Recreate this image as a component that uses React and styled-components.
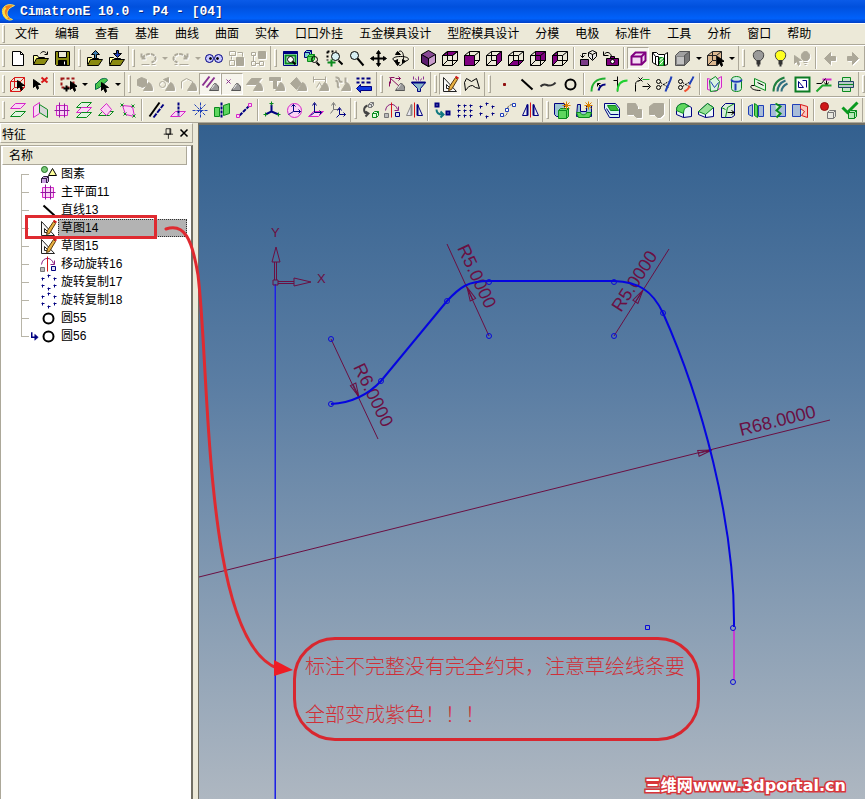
import React from 'react';
import styled, { createGlobalStyle, css } from 'styled-components';

const GlobalStyle = createGlobalStyle`
  * { box-sizing: border-box; }
  html, body, #root { height: 100%; }
  body {
    margin: 0;
    overflow: hidden;
    background: #ece9d8;
    color: #000;
    font-family: "Liberation Sans", "Noto Sans CJK SC", sans-serif;
    font-size: 12px;
  }
  button {
    font: inherit;
    color: inherit;
    border: 0;
    padding: 0;
    background: none;
  }
`;

const Window = styled.div`
  position: relative;
  display: flex;
  flex-direction: column;
  height: 100vh;
  overflow: hidden;
`;

const TitleBar = styled.header`
  flex: none;
  display: flex;
  align-items: center;
  gap: 2px;
  height: 23px;
  background: linear-gradient(#0a5be8, #0050dd 30%, #0061fb 80%, #003fc4);

  h1 {
    margin: 0;
    color: #fff;
    font: bold 13px "Liberation Mono", monospace;
    text-shadow: 1px 1px 0 #0a2a80;
    white-space: pre;
  }
`;

const Bar = styled.div`
  flex: none;
  display: flex;
  align-items: center;
  height: 26px;
  border-top: 1px solid #fff;
  border-bottom: 1px solid #aca899;
  overflow: hidden;
`;

const MenuBar = styled(Bar)`
  height: 22px;
`;

const MenuButton = styled.button`
  flex: none;
  padding: 0 8px;
  line-height: 20px;
  white-space: nowrap;
`;

const Grip = styled.span`
  flex: none;
  width: 3px;
  height: 18px;
  margin: 0 2px;
  border: 1px solid;
  border-color: #fff #aca899 #aca899 #fff;
`;

const Band = styled.div`
  flex: none;
  display: flex;
  align-items: center;
  height: 24px;
  padding-right: 1px;
  border-right: 1px solid #aca899;
  margin-right: 1px;
`;

const Separator = styled.span`
  flex: none;
  width: 2px;
  height: 22px;
  margin: 0 2px;
  border-left: 1px solid #aca899;
  border-right: 1px solid #fff;
`;

const ToolButton = styled.button`
  flex: none;
  display: flex;
  align-items: center;
  justify-content: center;
  width: 22px;
  height: 22px;

  ${(p) => p.$active && css`
    background: #f6f4ec;
    border: 1px solid;
    border-color: #aca899 #fff #fff #aca899;
  `}
  ${(p) => p.$off && css`
    svg { filter: drop-shadow(1px 1px 0 #fff); }
  `}
`;

const DropButton = styled.button`
  flex: none;
  display: flex;
  justify-content: center;
  width: 11px;

  &::after {
    content: "";
    border: 3px solid transparent;
    border-top-color: ${(p) => (p.$off ? '#aca899' : '#000')};
    border-bottom: 0;
  }
`;

const Main = styled.main`
  flex: 1;
  display: flex;
  min-height: 0;
`;

const Sidebar = styled.aside`
  flex: none;
  display: flex;
  flex-direction: column;
  width: 193px;
  margin-right: 5px;
`;

const PanelTitle = styled.div`
  display: flex;
  align-items: center;
  gap: 2px;
  height: 20px;
  padding: 0 1px;
  border: 1px solid #fff;
  border-right-color: #aca899;
  border-bottom-color: #aca899;

  h2 {
    flex: 1;
    margin: 0;
    font-size: 12px;
    font-weight: normal;
  }
  button {
    display: flex;
    width: 14px;
    height: 14px;
  }
`;

const TreePanel = styled.div`
  flex: 1;
  margin-top: 2px;
  padding: 0 4px 0 1px;
  border: 1px solid #aca899;
  border-right: 2px solid #716f64;
  border-bottom: 0;
  background: #fff;
`;

const ColumnHead = styled.div`
  height: 19px;
  padding-left: 6px;
  line-height: 18px;
  background: #ece9d8;
  border: 1px solid;
  border-color: #fff #aca899 #aca899 #fff;
`;

const Tree = styled.ul`
  margin: 0;
  padding: 0;
  list-style: none;
`;

const TreeRow = styled.li`
  position: relative;
  display: flex;
  align-items: center;
  height: 18px;
  padding-left: 19px;
`;

const Branch = styled.span`
  align-self: stretch;
  width: 8px;
  margin-right: 1px;
  background:
    linear-gradient(#b8b5a8, #b8b5a8) 0 9px / 8px 1px no-repeat,
    linear-gradient(#b8b5a8, #b8b5a8) 0 ${(p) => (p.$first ? '9px' : '0')} / 1px
      ${(p) => (p.$last ? '9px' : '18px')} no-repeat;
`;

const Marker = styled.span`
  display: flex;
  width: 9px;
`;

const TreeLabel = styled.button`
  flex: 1;
  height: 18px;
  margin-left: 1px;
  padding-left: 2px;
  line-height: 16px;
  text-align: left;
  white-space: nowrap;
  border: 1px solid transparent;
  ${(p) => p.$selected && css`
    background: #b3b3b3;
    border: 1px dotted #333;
  `}
`;

const Viewport = styled.section`
  flex: 1;
  min-width: 0;
  border-top: 2px solid #716f64;
  border-left: 1px solid #716f64;
  background: linear-gradient(#33608f, #5a7da3 38%, #8ca0b5 75%, #aeb7c1);

  svg { display: block; }
`;

const RowMark = styled.span`
  position: absolute;
  left: 23px;
  top: -4px;
  width: 132px;
  height: 24px;
  border: 3px solid #df2a30;
`;

const Overlay = styled.svg`
  position: absolute;
  inset: 0;
  width: 100%;
  height: 100%;
  pointer-events: none;
`;

const Callout = styled.p`
  position: absolute;
  left: 293px;
  top: 637px;
  width: 407px;
  margin: 0;
  padding: 2px 9px 0;
  border: 3px solid #d8272f;
  border-radius: 42px;
  color: #cf3038;
  font: 300 20px/48px "Noto Sans CJK SC", sans-serif;
  white-space: nowrap;
`;

const Watermark = styled.a`
  position: absolute;
  right: 19px;
  bottom: 2px;
  color: #fff;
  font: bold 16px/22px "DejaVu Sans", "Noto Sans CJK SC", sans-serif;
  text-decoration: none;
  -webkit-text-stroke: 3px #d8353a;
  paint-order: stroke fill;
`;

const K = '#000';
const G = '#aca899';
const N = '#000080';
const PU = '#800080';
const MG = '#d428c8';
const GR = '#0a8a1e';
const LG = '#5fd65f';
const PK = '#fbd3f4';
const BL = '#1f3fb8';
const RD = '#d81818';
const YE = '#ffe040';

const circ = (x, y, r) => `M${x - r} ${y}a${r} ${r} 0 1 0 ${2 * r} 0a${r} ${r} 0 1 0 ${-2 * r} 0z`;
const dots = (points) => points.map(([x, y]) => `M${x - 1} ${y}h3M${x} ${y - 1}v3`).join('');
const cursor = (x, y, c = K) => [`M${x} ${y}v8l2-2 2 4 1-1-1-4h3z`, c, c];
const lens = (x, y, r) => [[`M${x + r} ${y + r}l4 4`, K, 'none', 2], [circ(x, y, r), K, '#d8f0f4']];
const box = (x, y, s, c, f) => [
  [`M${x} ${y + 2}l2-2h${s}v${s}l-2 2h${-s}z`, c, f],
  [`M${x} ${y + 2}h${s}l2-2M${x + s} ${y + 2}v${s}`, c],
];
const wire = [['M1 6h10v10H1zM6 2h10v9H6zM1 6l5-4M11 6l5-4M11 16l5-5M1 16l5-5', K]];
const folder = [
  ['M2 15V8h4l1 1h6v2', K, '#ffff9c'],
  ['M2 16l3-6h12l-4 6z', K, '#8a8a10'],
];
const cone = ['M8 15l5-8c3 1 4 4 4 8z', G, G];
const coneDark = [['M8 15l5-7c3 0 5 4 4 7z', '#555', '#9a9a9a'], ['M10 13l3-4', '#fff']];
const scissors = [
  [circ(3, 6, 2), K], [circ(3, 12, 2), K], ['M5 7l8 5M5 11l8-5', K, 'none', 1, '2 1'],
];
const bulb = (f) => [
  ['M7 11c-5-3-4-10 2-10s7 7 2 10z', '#444', f],
  ['M7 12h4M7 14h4M8 16h2', '#333', 'none', 2],
];
const mirror = (c) => [
  ['M6 3L1 14h5z', c, '#e8e8f0', 1], ['M6 3v11', c, 'none', 2],
  ['M12 3l5 11h-5z', N, '#e8e8f0'], ['M12 3v11', N, 'none', 2], ['M9 1v15', RD],
];
const plane = (y, c, f) => [`M1 ${y + 5}l5-5h10l-5 5z`, c, f];
const spark = ['M13 0v8M9 4h8M10 1l6 6M16 1l-6 6', '#d88000'];

// each entry is a list of [path, stroke, fill, stroke width, dash] on an 18px grid
const icons = {
  newFile: [['M3 2h8l3 3v11H3z', K, '#fff'], ['M11 2v3h3', K]],
  open: [['M2 15V6h4l1 2h6v2', K, '#ffff9c'], ['M2 15l3-6h12l-4 6z', K, '#8a8a10'], ['M9 4c2-3 5-2 6 0M16 2v3h-3', K]],
  save: [['M2 2h14v14H3l-1-1z', K, '#8a8a10'], ['M5 2h8v6H5z', K, '#ece9d8'], ['M5 11h8v5H5z', K, K], ['M11 12v3', '#fff']],
  importFile: [...folder, ['M9 9V5H6l4-4 4 4h-3v4z', K, '#3f7fb0']],
  exportFile: [...folder, ['M9 1v3H6l4 4 4-4h-3V1z', K, BL]],
  undo: [['M2 4v5h5M3 9c2-6 13-6 13 0 0 2-1 3-4 4', G, 'none', 2, '4 1'], ['M2 15h8M12 15h4', G]],
  redo: [['M15 4v5h-5M14 9C12 3 1 3 1 9c0 2 1 3 4 4', G, 'none', 2, '4 1'], ['M7 15h9M2 15h3', G]],
  eyes: [[circ(4, 9, 4), N, '#c8c8ff'], [circ(13, 9, 4), N, '#c8c8ff'], [circ(5, 9, 1), K, K], [circ(12, 9, 1), K, K]],
  swap: [['M2 2h6v4H2zM2 11h5v5H2z', G], ['M9 8h7v8H9z', G, G], ['M10 3h5v4M4 7v3', G]],
  structure: [['M9 2h7v7H9z', G, G], ['M2 3h4v3H2zM2 12h4v4H2zM10 12h4v4h-4zM4 6v6M6 14h4', G]],
  zoomFit: [['M2 2h14v14H2z', N, '#dff'], ['M2 3h14', N, 'none', 3], ['M4 6h10v8H4z', GR, 'none', 2], [circ(9, 10, 3), K, '#fff'], ['M11 12l3 3', K, 'none', 2]],
  zoomBoxes: [...box(1, 1, 5, N, '#7ed0d0'), ...box(4, 5, 5, GR, LG), [circ(11, 10, 3), K], ['M13 13l3 3', K, 'none', 2]],
  zoomIn: [['M2 2h9M2 2v9', K, 'none', 2, '2 2'], ['M13 11l4 4', K, 'none', 2], [circ(10, 7, 4), K, '#d8f0f4'], ['M6 10v7M2 13h8', GR, 'none', 2]],
  zoom: [[circ(7, 6, 4), K, '#d8f0f4'], ['M10 9l6 7', K, 'none', 2]],
  pan: [['M9 3v12M3 9h12', K, 'none', 2], ['M7 4l2-3 2 3zM7 14l2 3 2-3zM4 7L1 9l3 2zM14 7l3 2-3 2z', K, K]],
  orbit: [['M6 12c-7-1-6-5 3-5s11 4 3 5M6 5c1-5 6-5 6 3s-4 10-6 6', K], ['M6 10v4l-3-2zM11 10v4l3-2zM4 5h5L6 2zM4 13h4l-2 3z', K, K]],
  cube: [['M9 1l7 4v8l-7 4-7-4V5z', K, '#8a4a96'], ['M9 9l7-4v8l-7 4z', K, '#c89ccc'], ['M2 5l7 4v8l-7-4z', K, '#5c1c70']],
  faceTop: [['M1 6l5-4h10l-5 4z', K, PU], ...wire],
  faceFront: [...wire, ['M1 6h10v10H1z', K, PU]],
  faceRight: [...wire, ['M11 6l5-4v9l-5 5z', K, PU]],
  faceBottom: [['M1 16l5-5h10l-5 5z', K, PU], ...wire],
  faceBack: [['M6 2h10v9H6z', K, PU], ...wire],
  faceLeft: [['M1 6l5-4v9l-5 5z', K, PU], ...wire],
  cameraAdd: [['M1 10h8v6H1z', K, '#7a3c86'], ['M3 8V4h4M1 6l2 2 2-2', K], ['M9 3l4-2 4 2v4l-4 4-4-4zM9 3l4 2 4-2M13 5v5', K, '#e4e4e4']],
  cameraBack: [['M5 9h12v7H5zM9 7h4v2H9z', K, PU], [circ(11, 12, 2), K, '#fff'], ['M2 2v4h5M3 5c1-3 6-3 7 2', K]],
  shade: [['M2 7l4-4h10v8l-4 4H2z', PU, '#f4dcf4', 2], ['M2 7h10l4-4M12 7v8', PU, 'none', 2]],
  section: [['M1 3h4l2 2h6l3-2v12l-3 1H6l-5-3z', K, '#fff'], ['M1 3l3 4v8M4 7h3v9M13 5v11', K], ['M8 8h4v8H8z', GR, LG], ['M8 11l4-3M8 15l4-4', '#fff']],
  solid: [['M2 6l4-4h10v9l-5 5H2z', '#555', '#a0a0a0'], ['M3 7h8v8H3z', '#888', '#c0c0c0'], ['M11 6l5-4v9l-5 5z', '#555', '#787878']],
  pickBox: [['M1 6l5-4h9v9l-4 5H1z', '#222', '#dcb890'], ['M1 6h9l5-4M10 6v10M6 2v9h9M1 16l5-5', '#222'], cursor(11, 7)],
  bulbOff: bulb('#9a9a9a'),
  bulbOn: bulb('#ffff20'),
  bulbPick: [['M10 11c-4-3-2-9 2-9s6 6 2 9zM10 13h4M11 15h2', G, G], cursor(1, 6, G)],
  prev: [['M3 9l6-6v4h5v4H9v4z', G, G]],
  next: [['M15 9L9 3v4H4v4h5v4z', G, G]],

  pickSolid: [['M1 6h10v10H1zM5 2h10v10H5zM1 6l4-4M11 6l4-4M1 16l4-4M11 16l4-4', RD], cursor(8, 5)],
  unpick: [cursor(2, 4), ['M10 2l6 5M16 2l-6 5', RD, 'none', 2]],
  pickWindow: [['M2 3h12v9H2z', '#a01818', 'none', 2, '3 2'], cursor(11, 6), ['M7 10v6M4 13h6', K, 'none', 2]],
  pickGreen: [['M3 9l5-5c4-2 7-1 7 1l-8 7z', '#064', '#4cc84c'], ['M7 12l-4 2V8', '#064', '#4cc84c'], cursor(9, 7)],
  offCube: [['M2 4l4-2 5 2v6l-4 2-5-2z', G, G], cone],
  offGear: [[circ(5, 9, 3), G], ['M6 4l5-2v5z', G, G], cone],
  offPen: [['M2 13V6l5-3 6 3v3', G], cone],
  filterCurve: [['M1 10l7-9M5 12l8-10', '#8a3090', 'none', 2], ...coneDark],
  filterPoint: [['M3 4l4 4M7 4L3 8', '#8a3090'], ...coneDark],
  offPlane: [['M1 9l5-6h10l-5 6z', G, G], cone],
  offText: [['M2 2h11v3H9v8H6V5H2z', G, G], cone],
  offTag: [['M1 8l6-6 5 6-5 6z', G, G], cone],
  offDim: [['M2 1v6M14 1v6M2 4h12M5 12l3-5 3 5', G], cone],
  offSketch: [['M2 2c6-1 2 6 7 4M2 5c5 1 0 7 4 7M12 2v6', G, 'none', 2], cone],
  filterAll: [['M1 3h3M6 3h3M11 3h4M1 7h3M6 7h3M11 7h4', N, 'none', 2], ['M1 13l4-4v2h11v4H5v2z', N, '#1038e0']],
  axisFilter: [['M2 2l10 9M3 8V2h4M2 11V6M8 3h5l-2-2M13 3l-2 2', '#8a1060'], ...coneDark],
  funnel: [['M2 7h14l-5 6v3H8v-3z', N, '#8ab8c8'], ['M2 7h14', N, '#fff', 2], ['M4 1v3M9 1v4M14 1v3M6 3l1 2M12 3l-1 2', '#8a3090']],
  sketch: [['M2 2v14h13z', '#222', '#f8f8f8'], ['M5 9v4h4z', '#222'], ['M14 2l2 2-6 10-3 1 1-4z', '#5a3a10', '#e8b040'], ['M14 1l3 2', RD, 'none', 2]],
  polyline: [['M2 15L1 7l2-4 5 3 5-3 3 10-4-1-3-2c-3 0-5 2-7 5z', K]],
  point: [['M8 8h2v2H8z', '#901010', '#901010']],
  line: [['M4 4l11 10', K, 'none', 2]],
  curve: [['M1 11c4-4 6-1 8-1s5 0 7-3', '#333', 'none', 2]],
  circle: [[circ(9, 9, 5), K, 'none', 2]],
  fillet: [['M2 16C2 8 7 3 16 3', '#20b030', 'none', 2], ['M16 9c-3 0-6 2-7 6', N, 'none', 2], ['M11 11L8 8M8 8h3M8 8v3', K]],
  corner: [['M2 5h4M6 1v4M6 5v11', K], ['M6 16C6 9 9 5 16 5', '#20d030', 'none', 2]],
  extend: [['M2 16V9c0-3 2-4 5-4M5 2l4 4M9 2L5 6', K], ['M9 4h7', '#20c030'], ['M9 11h7M14 8l3 3-3 3', K]],
  cut: [...scissors, ['M16 1c-1 5-4 9-6 15', BL, 'none', 2]],
  cutRed: [...scissors, ['M16 1c-1 3-3 5-4 8', BL, 'none', 2], ['M12 10c0 3-2 4-5 6', '#f05030', 'none', 2]],
  surfWrap: [['M2 3l7 2 7-4v11l-6 4-8-2z', MG, PK], ['M4 5l6-4 4 5-2 9-7 1z', GR, '#d8f4e0'], ['M5 6l4 6 4-5', BL]],
  cylinder: [['M4 4c0-4 10-4 10 0v9c0 4-10 4-10 0z', GR, '#d0ece0'], ['M4 4c0 3 10 3 10 0M8 8v7', BL, 'none', 2]],
  sweep: [['M5 3l11 5v7L5 10z', GR, '#e0f4e0'], ['M5 10H2c-2 2 1 5 9 5M8 7l6 3', K]],
  offset: [['M2 16C2 9 6 4 13 2', '#208040', 'none', 2], ['M6 16c0-6 3-9 8-11M10 16c0-4 2-6 6-8', '#307080', 'none', 2]],
  region: [['M2 2h14v14H2z', '#0c7c24', '#fff', 2], ['M5 6v6h5zM9 5h4v7', N]],
  project: [['M7 4h9', MG, 'none', 2], ['M1 8h5l4-5M11 5v4M9 7l2 3 2-3', K], ['M1 16l6-6h9', '#20a830', 'none', 2]],
  align: [['M5 2h8v4H5zM5 12h8v4H5z', GR, '#c8e8c8'], ['M1 6h15v6H1z', '#246', '#b8c8c8'], ['M1 9h15', GR]],

  planeA: [plane(2, MG, PK), plane(10, GR, '#e0f4e0')],
  planeB: [['M2 5l6-4v11l-6 4z', MG, PK], ['M8 3l8 5v8l-8-5z', GR, '#d8d8d8']],
  planeC: [['M3 4h11v10H3z', MG, PK], ['M6 1v15M11 2v14M1 9h15', '#9018a0']],
  planeD: [plane(1, GR, '#e0f4e0'), plane(6, MG, PK), plane(11, GR, '#e0f4e0')],
  planeE: [['M1 14l4-4h11l-4 4z', GR], ['M3 8l6-6 5 6-5 6z', MG, PK]],
  planeF: [['M3 4l10 1 2 10-9-2z', MG, PK], ['M1 2l3 3M4 2L1 5M12 3l3 3M15 3l-3 3M13 13l3 3M16 13l-3 3M4 11l3 3M7 11l-3 3', GR]],
  axisTwo: [['M2 15L12 1', K, 'none', 2], ['M6 16L16 3', N, 'none', 2, '5 1']],
  axisNormal: [['M1 15l5-5h10l-5 5z', MG, PK], ['M9 1v13', N, 'none', 2, '3 1']],
  axisStar: [['M9 1v15M1 9h15M3 3l11 11M14 3L3 14', BL, 'none', 1, '3 1']],
  axisPlanes: [['M1 6h5v9H1zM10 4l6-2v10l-6 2z', GR, LG], ['M8 1v15', N, 'none', 2, '3 1']],
  axisPoints: [['M4 14L14 4', N, 'none', 2, '4 1'], ['M1 13h3v3H1zM13 2h3v3h-3z', MG, PK]],
  ucsA: [['M8 3v7l-6 3M8 10l7 3', N, 'none', 2], ['M6 2h4M8 0v4M0 13h4M2 11v4M13 13h4M15 11v4', GR]],
  ucsB: [[circ(9, 9, 7), MG, PK], ['M8 3v7l-5 3M8 10h7M13 8l2 2-2 2M6 5l2-2 2 2', N, 'none', 1]],
  ucsC: [['M1 15l5-5h10l-5 5z', MG, PK], ['M7 2v9h7M7 11l-4 3M5 4l2-3 2 3M12 9l2 2-2 2', N]],
  ucsD: [['M4 2v6l-3 4M4 8h6M2 4l2-3 2 3', '#777'], ['M10 7v6l-3 3M10 13h6M8 9l2-3 2 3M14 11l2 2-2 2', N]],
  moveCopy: [...box(7, 1, 3, '#777', '#ddd'), ['M6 4C1 6 2 12 6 12M4 10l3 2-3 3', '#444', 'none', 2], ...box(11, 10, 4, GR, '#dfd')],
  moveTurn: [['M2 9c1-8 10-8 12-1M15 5v4h-4', '#8a2080'], ['M8 1v15', RD], ['M1 12h4v4H1z', '#777', '#bbb'], ['M12 11h4v4h-4z', N, '#dde']],
  mirrorMove: mirror('#888'),
  copyMove: [['M2 2h3v3H2z', N, '#dde', 2], ['M3 8c0 4 2 5 6 5M7 10l3 3-3 3', '#107880', 'none', 2], ['M13 10h3v3h-3z', N, '#dde', 2]],
  array: [[dots([[3, 4], [9, 4], [15, 4], [3, 9], [9, 9], [15, 9], [3, 14], [9, 14], [15, 14]]), N]],
  polar: [[dots([[9, 2], [3, 5], [15, 5], [3, 12], [15, 12], [9, 15]]), N]],
  along: [['M2 14c5 2 6-2 6-6s3-5 6-5', '#555', 'none', 1, '3 1'], ['M1 12h3v3H1zM6 7h3v3H6zM13 2h3v3h-3z', BL, '#fff']],
  mirrorCopy: mirror(N),
  insertA: [['M1 2h10v13H3l-2-2z', N, '#9cc4d0'], ...box(5, 7, 8, GR, LG), spark],
  insertB: [['M2 3h3v7h6V4h5v11H1z', N, '#9cc4d0'], ['M1 11h4c0 3 6 3 6 0h5l-2 5H3z', GR, LG], spark],
  pocket: [['M1 2h11l4 5v9H6L1 7z', N, '#d8f4f0'], ['M4 4h8l3 5H7z', GR, '#38b838'], ['M3 7l4 6h8', N]],
  offStep: [['M2 2h8l2 3v3h4v8h-5l-3-3H2z', G, G]],
  offStep2: [['M2 5l4-3h10v11l-3 3h-3l-3-3H2z', G, G]],
  filletSolid: [['M1 9c0-5 3-7 8-7l7 4v9l-8 1-7-3z', N, '#e8f4f4'], ['M1 9c0-5 3-7 8-7l5 3c-4 0-6 3-6 7z', GR, LG], ['M8 12v4', N]],
  chamfer: [['M1 10l9-8 6 4v9l-8 1-7-3z', N, '#f0f8f8'], ['M1 10l9-8 6 4-8 7z', GR, '#98e098'], ['M8 13v3', N]],
  draft: [['M2 6l4-4h9v12l-3 2H2z', N, '#d8ecd8'], ['M6 16L8 6l7-4M2 6l4 2', GR, 'none', 1], ['M8 11h7M12 9l3 2-3 2', K]],
  splitA: [['M1 5l4-2v12l-4-2zM11 4h5v11h-5z', BL, '#a8bcd8'], ['M7 2l3 2v12l-3-2z', GR, LG]],
  splitB: [['M1 3h15v12H1z', BL, '#a8bcd8'], ['M6 2l5 3-4 4 4 3-4 4', GR, '#d0f0d0', 2]],
  splitC: [['M1 3h8v12H1z', BL, '#a8bcd8'], ['M9 3l7 2v11l-6-2 3-4-4-3z', RD, '#f8c8c0']],
  stop: [[circ(5, 5, 4), '#901010', '#d01818'], ...box(8, 9, 6, '#777', '#e8e8e0')],
  check: [['M1 6l5 5L16 1', '#0a9a20', 'none', 3], ...box(7, 9, 6, GR, '#b8e8b8')],
  arrowNavy: [['M3 1v10h7', N, 'none', 3], ['M9 5l7 6-7 6z', N, N]],
  shapes: [[circ(5, 4, 3), '#1c6c1c', '#78c878'], ['M13 3l-4 7h8z', K, '#ffff9c'], ...box(2, 11, 5, '#302040', '#c8a0e0')],
  logo: [['M14 2C6-1 1 4 2 9s5 9 10 7c-5-2-6-5-5-8s3-4 7-6z', '#f0e060', '#f08020'], ['M5 4c-3 4-2 8 2 11', YE, 'none', 2]],
  pin: [['M6 3h6v7H6zM3 10h12M9 10v6M11 3v7', K, 'none', 1]],
  close: [['M4 4l9 9M13 4l-9 9', K, 'none', 2]],
};

const Icon = ({ name, size = 18 }) => (
  <svg width={size} height={size} viewBox="-0.5 -0.5 18 18" aria-hidden="true">
    {icons[name].map(([d, stroke, fill = 'none', width = 1, dash], i) => (
      <path key={i} d={d} stroke={stroke} fill={fill} strokeWidth={width} strokeDasharray={dash} />
    ))}
  </svg>
);

const menus = [
  '文件', '编辑', '查看', '基准', '曲线', '曲面', '实体', '口口外挂', '五金模具设计',
  '型腔模具设计', '分模', '电极', '标准件', '工具', '分析', '窗口', '帮助',
];

// "|" separator, "v" drop-down arrow, "*" pressed, "-" disabled
const toolbars = [
  [
    'newFile open save',
    'importFile exportFile',
    '-undo -v -redo -v eyes -swap -structure',
    'zoomFit zoomBoxes zoomIn zoom pan orbit | cube faceTop faceFront faceRight faceBottom faceBack faceLeft | cameraAdd cameraBack | *shade section solid v pickBox v',
    'bulbOff bulbOn -bulbPick | -prev -next',
  ],
  [
    'pickSolid unpick | pickWindow v pickGreen v',
    '-offCube -offGear -offPen *filterCurve *filterPoint -offPlane -offText -offTag -offDim -offSketch filterAll',
    'axisFilter funnel',
    '*sketch polyline',
    'point line curve circle | fillet corner extend cut cutRed | surfWrap cylinder sweep offset region project align',
    '',
  ],
  [
    'planeA planeB planeC planeD planeE planeF | axisTwo axisNormal axisStar axisPlanes axisPoints | ucsA ucsB ucsC ucsD',
    'moveCopy moveTurn mirrorMove | copyMove array polar along mirrorCopy',
    'insertA insertB | pocket -offStep -offStep2 | filletSolid chamfer draft | splitA splitB splitC | stop check',
  ],
];

const features = [
  { icon: 'shapes', label: '图素' },
  { icon: 'planeC', label: '主平面11' },
  { icon: 'line', label: '直线13' },
  { icon: 'sketch', label: '草图14', selected: true },
  { icon: 'sketch', label: '草图15' },
  { icon: 'moveTurn', label: '移动旋转16' },
  { icon: 'polar', label: '旋转复制17' },
  { icon: 'polar', label: '旋转复制18' },
  { icon: 'circle', label: '圆55' },
  { icon: 'circle', label: '圆56', current: true },
];

const nodes = [
  [331, 339], [331, 404], [381, 381], [447, 301], [489, 336], [489, 282],
  [614, 282], [614, 336], [663, 313], [733, 628], [733, 682],
];

const dimensions = [
  { text: 'R6.0000', x: 353, y: 367, angle: 64, line: 'M331 339L378 439', tip: [359, 397], dir: 65 },
  { text: 'R5.0000', x: 457, y: 248, angle: 65, line: 'M447 244L489 336', tip: [467, 287], dir: 245 },
  { text: 'R5.0000', x: 621, y: 313, angle: -57, line: 'M669 249L614 336', tip: [643, 290], dir: -57 },
  { text: 'R68.0000', x: 741, y: 436, angle: -14, line: 'M199 577L830 420', tip: [712, 450], dir: -14 },
];

const Tool = ({ token }) => {
  if (token === '|') return <Separator />;
  const active = token[0] === '*';
  const off = token[0] === '-';
  const name = token.replace(/^[*-]/, '');
  if (name === 'v') return <DropButton $off={off} disabled={off} aria-label="more" />;
  return (
    <ToolButton $active={active} $off={off} disabled={off} aria-label={name}>
      <Icon name={name} />
    </ToolButton>
  );
};

const Drawing = () => (
  <svg width="100%" height="100%" fill="none">
    <g transform="translate(-199 -125)">
      <path d="M275 284V2000" stroke="#2430f0" strokeWidth="2" strokeOpacity="0.6" />
      <path d="M275.500 284V2000" stroke="#2020e0" />
      <g stroke="#6b0f42">
        <path d="M274.500 280V262M276.500 280V262M272 262h8l-4-15zM278 281.500h16M278 283.500h16M294 278v8l17-4z" />
        <path d="M273 280h5v5h-5z" />
        {dimensions.map((d) => (
          <React.Fragment key={d.line}>
            <path d={d.line} />
            <path d="M0 0L-14 -3V3zM0 0H-14" transform={`translate(${d.tip}) rotate(${d.dir})`} />
          </React.Fragment>
        ))}
      </g>
      <g fill="#6b0f42" fontFamily="Liberation Sans, sans-serif" fontSize="18">
        <text x="271" y="237" fontSize="13">Y</text>
        <text x="317" y="283" fontSize="13">X</text>
        {dimensions.map((d) => (
          <text key={d.line} transform={`translate(${d.x} ${d.y}) rotate(${d.angle})`}>{d.text}</text>
        ))}
      </g>
      <path
        d="M331 404C350 403 366 397 381 381L447 301C460 287 468 281 489 281H614C638 282 652 290 663 313C701 398 735 520 734 627"
        stroke="#0505e0"
        strokeWidth="2"
      />
      <path d="M734 630V680" stroke="#c63fd0" strokeWidth="2" />
      <g stroke="#0a0ad8">
        {nodes.map(([x, y]) => <circle key={`${x}-${y}`} cx={x} cy={y} r="2.500" />)}
        <path d="M645.500 625.500h4v4h-4z" />
      </g>
    </g>
  </svg>
);

const App = () => (
  <Window>
    <GlobalStyle />
    <TitleBar>
      <Icon name="logo" />
      <h1>CimatronE 10.0 - P4 - [04]</h1>
    </TitleBar>

    <MenuBar as="nav">
      <Grip />
      {menus.map((m) => <MenuButton key={m}>{m}</MenuButton>)}
    </MenuBar>

    {toolbars.map((bands, row) => (
      <Bar key={row} role="toolbar">
        {bands.map((band, i) => (
          <Band key={i}>
            <Grip />
            {band.split(' ').filter(Boolean).map((token, j) => <Tool key={j} token={token} />)}
          </Band>
        ))}
      </Bar>
    ))}

    <Main>
      <Sidebar>
        <PanelTitle>
          <h2>特征</h2>
          <button aria-label="pin"><Icon name="pin" size={14} /></button>
          <button aria-label="close"><Icon name="close" size={14} /></button>
        </PanelTitle>
        <TreePanel>
          <ColumnHead>名称</ColumnHead>
          <Tree>
            {features.map((f, i) => (
              <TreeRow key={f.label}>
                <Branch $first={i === 0} $last={i === features.length - 1} />
                <Marker>{f.current && <Icon name="arrowNavy" size={10} />}</Marker>
                <Icon name={f.icon} />
                <TreeLabel $selected={f.selected}>{f.label}</TreeLabel>
                {f.selected && <RowMark />}
              </TreeRow>
            ))}
          </Tree>
        </TreePanel>
      </Sidebar>
      <Viewport>
        <Drawing />
      </Viewport>
    </Main>

    <Overlay fill="none">
      <path
        d="M166 229C184 223 192 238 198 275C210 370 203 640 277 668"
        stroke="#df2a30"
        strokeWidth="3"
        strokeLinecap="round"
      />
      <path d="M274 660L293 670L274 676z" fill="#ee1c24" />
    </Overlay>
    <Callout>
      标注不完整没有完全约束，注意草绘线条要
      <br />
      全部变成紫色！！！
    </Callout>
    <Watermark href="#">三维网www.3dportal.cn</Watermark>
  </Window>
);

export default App;
